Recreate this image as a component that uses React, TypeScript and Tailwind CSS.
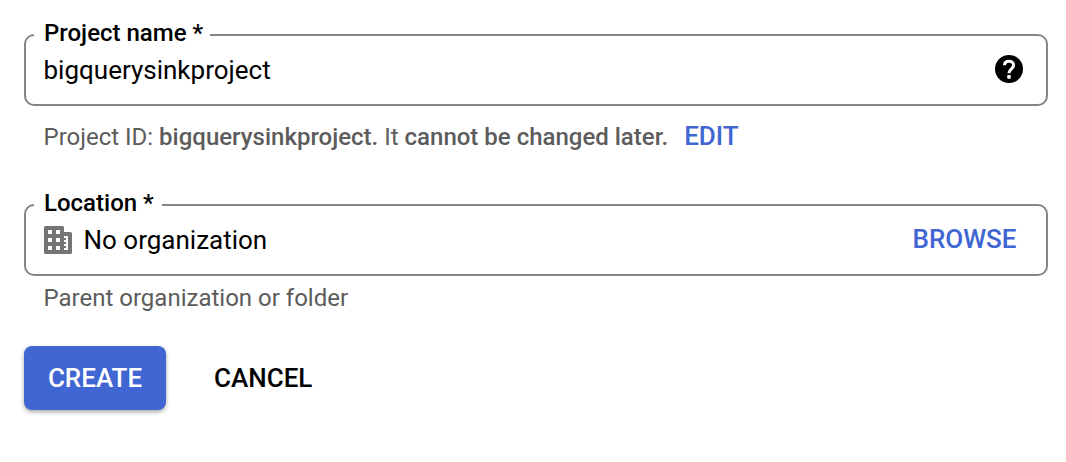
import React from "react";

const boxBase =
  "relative flex h-18 w-[1024px] items-center rounded-[10px] border-2 border-[#80868b] pl-[17.5px] text-[26px] text-black";

function Legend({ children, className }: { children: string; className: string }) {
  return (
    <span className={"absolute -top-[17px] left-2 h-7 bg-white pl-2.5 text-[24px] leading-7 font-medium whitespace-nowrap " + className}>
      {children}
    </span>
  );
}

export default function App() {
  return (
    <main className="h-[462px] w-[1066px] overflow-hidden bg-white pt-[34px] pl-6 font-['Roboto',sans-serif]">
      <div className={boxBase}>
        <Legend className="w-[176px]">Project name *</Legend>
        <span className="grow leading-8">bigquerysinkproject</span>
        <svg viewBox="0 0 28 28" className="mr-[23px] size-7 -translate-y-px" fill="none">
          <circle cx="14" cy="14" r="14" fill="#000" />
          <path d="M9.5 10.2C9.5 7.6 11.4 6.2 13.9 6.2s4.7 1.4 4.7 4.1c0 3.5-4.7 3.7-4.7 8" stroke="#fff" strokeWidth="3" />
          <rect x="12.2" y="20" width="3.6" height="3.8" rx="1" fill="#fff" />
        </svg>
      </div>
      <div className="mt-[15px] flex h-8 items-center pl-[19.5px] text-[24px] leading-8 whitespace-pre text-[#5c5c5c]">
        <p>
          Project ID: <b className="font-medium">bigquerysinkproject.</b> It <b className="font-medium">cannot be changed later.</b>
        </p>
        <button className="mb-0.5 ml-4 text-[26px] leading-8 font-medium text-[#3f66d2]">EDIT</button>
      </div>
      <div className={boxBase + " mt-[51px]"}>
        <Legend className="w-[128px]">Location *</Legend>
        <svg viewBox="0 0 28 28" className="ml-[0.5px] size-7" fill="#757575">
          <path
            fillRule="evenodd"
            d="M1.5 0H18.5Q20 0 20 1.5V6H26.5Q28 6 28 7.5V26.5Q28 28 26.5 28H1.5Q0 28 0 26.5V1.5Q0 0 1.5 0zM4 4v4h4V4zM12 4v4h4V4zM4 12v4h4v-4zM12 12v4h4v-4zM4 20v4h4v-4zM12 20v4h4v-4zM20 10v2h2v2h-2v2h2v2h-2v2h2v2h-2v2h4V10z"
          />
        </svg>
        <span className="ml-[11.5px] grow leading-8">No organization</span>
        <button className="mr-[29.5px] mb-0.5 text-[26px] leading-8 font-medium text-[#3f66d2]">BROWSE</button>
      </div>
      <p className="mt-[6px] pl-[19.5px] text-[24px] leading-8 text-[#5c5c5c]">Parent organization or folder</p>
      <div className="mt-8 flex items-center text-[26px] font-medium">
        <button className="h-16 w-[142px] rounded-[8px] bg-[#3f66d2] text-white shadow-[0_2px_4px_rgba(0,0,0,0.35)]">CREATE</button>
        <button className="ml-12 h-16 text-black">CANCEL</button>
      </div>
    </main>
  );
}
